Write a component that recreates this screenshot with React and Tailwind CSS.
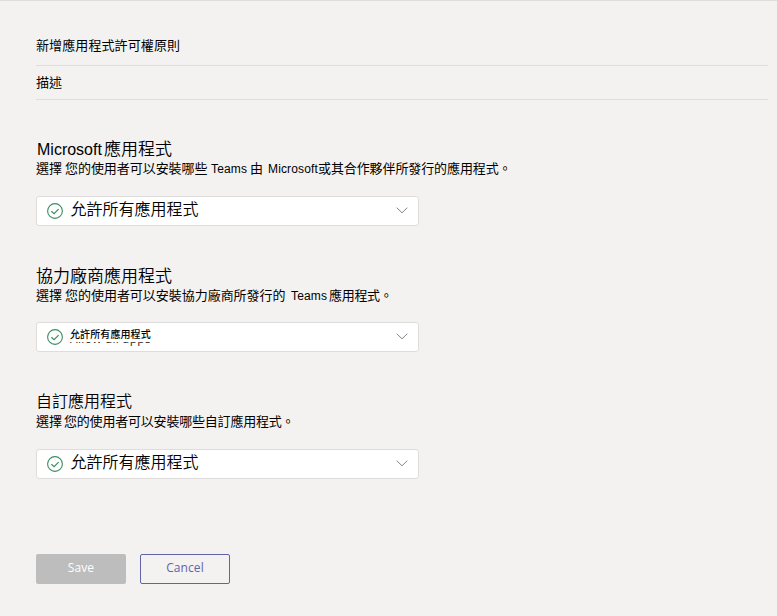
import React from "react";

function CheckCircle() {
  return (
    <svg className="h-4 w-4 shrink-0" viewBox="0 0 16 16" fill="none" stroke="#3b8d62">
      <circle cx="8" cy="8" r="7.4" strokeWidth="1.1" />
      <path d="M4.4 8.2 7.1 10.7 11.6 6.1" strokeWidth="1.2" />
    </svg>
  );
}

function Chevron() {
  return (
    <svg className="mb-0.5 h-[7px] w-[12px] shrink-0" viewBox="0 0 12 7" fill="none" stroke="#85848a">
      <path d="M.7 .7 6 5.8 11.3 .7" strokeWidth="1" />
    </svg>
  );
}

function Select({ children }) {
  return (
    <div className="flex h-[30px] w-[383px] items-center rounded-[3px] border border-[#dedddc] bg-white pl-2.5 pr-[10px]">
      <CheckCircle />
      <div className="ml-[7px] flex-1">{children}</div>
      <Chevron />
    </div>
  );
}

function Row({ className, children }) {
  return <div className={"flex items-center whitespace-pre " + className}>{children}</div>;
}

const LargeLabel = () => (
  <div className="-mt-[3px] pl-[0.5px] text-[16px] font-[350] leading-5">允許所有應用程式</div>
);

export default function App() {
  return (
    <div className="h-[616px] w-[777px] overflow-hidden border-t border-[#dfdedd] bg-[#f3f2f1] pl-9 pr-[9px] font-['Liberation_Sans','Noto_Sans_CJK_TC',sans-serif] text-black">
      <Row className="mt-[30px] h-[35px] border-b border-[#dfdedd] pb-[4px] text-[13px] leading-5 tracking-[0.1px]">新增應用程式許可權原則</Row>
      <Row className="h-[34px] border-b border-[#dfdedd] pt-px text-[13px] leading-5">描述</Row>

      <section className="mt-[40px] h-[127px]">
        <Row className="h-5 pl-px text-[16px] leading-5">
          <span className="w-[67px]">Microsoft</span>
          <span className="text-[17px] font-[350]">應用程式</span>
        </Row>
        <Row className="h-[18px] text-[13px] leading-[18px]">
          <span className="w-[29px]">選擇</span>
          <span className="w-[146px] tracking-[-0.05px]">您的使用者可以安裝哪些</span>
          <span className="w-[39px] text-[12px] tracking-[0.15px]">Teams</span>
          <span className="w-[18px]">由</span>
          <span className="w-[50px] text-[12px] tracking-[0.15px]">Microsoft</span>
          <span className="tracking-[-0.1px]">或其合作夥伴所發行的應用程式。</span>
        </Row>
        <div className="mt-[18px]">
          <Select><LargeLabel /></Select>
        </div>
      </section>

      <section className="h-[125px]">
        <Row className="h-5 text-[17px] font-[350] leading-5">協力廠商應用程式</Row>
        <Row className="h-[18px] text-[13px] leading-[18px]">
          <span className="w-[29px]">選擇</span>
          <span className="w-[226px] tracking-[-0.03px]">您的使用者可以安裝協力廠商所發行的</span>
          <span className="w-[38px] text-[12px] tracking-[0.15px]">Teams</span>
          <span className="tracking-[-0.3px]">應用程式。</span>
        </Row>
        <div className="mt-[17px]">
          <Select>
            <div className="mt-0.5 h-[22px]">
              <div className="h-[15px] text-[10px] font-medium leading-[15px] tracking-[0.1px]">允許所有應用程式</div>
              <div className="flex h-[6px] items-start overflow-hidden">
                <span className="-mt-3 font-['Open_Sans',sans-serif] text-[12px] leading-[18px] tracking-[0.35px] text-[#252423]">Allow all apps</span>
              </div>
            </div>
          </Select>
        </div>
      </section>

      <section className="h-[162px]">
        <Row className="h-5 text-[16px] font-[350] leading-5">自訂應用程式</Row>
        <Row className="h-[20px] text-[13px] leading-[20px]">
          <span className="w-[28px]">選擇</span>
          <span className="tracking-[-0.2px]">您的使用者可以安裝哪些自訂應用程式。</span>
        </Row>
        <div className="mt-[17px]">
          <Select><LargeLabel /></Select>
        </div>
      </section>

      <div className="flex gap-3.5 font-['Open_Sans',sans-serif] text-[12px] tracking-[0.1px]">
        <button className="h-[30px] w-[90px] rounded-[2px] bg-[#bdbdbd] pb-[3px] text-white">Save</button>
        <button className="h-[30px] w-[90px] rounded-[2px] border border-[#6264a7] pb-[3px] text-[#6264a7]">Cancel</button>
      </div>
    </div>
  );
}
